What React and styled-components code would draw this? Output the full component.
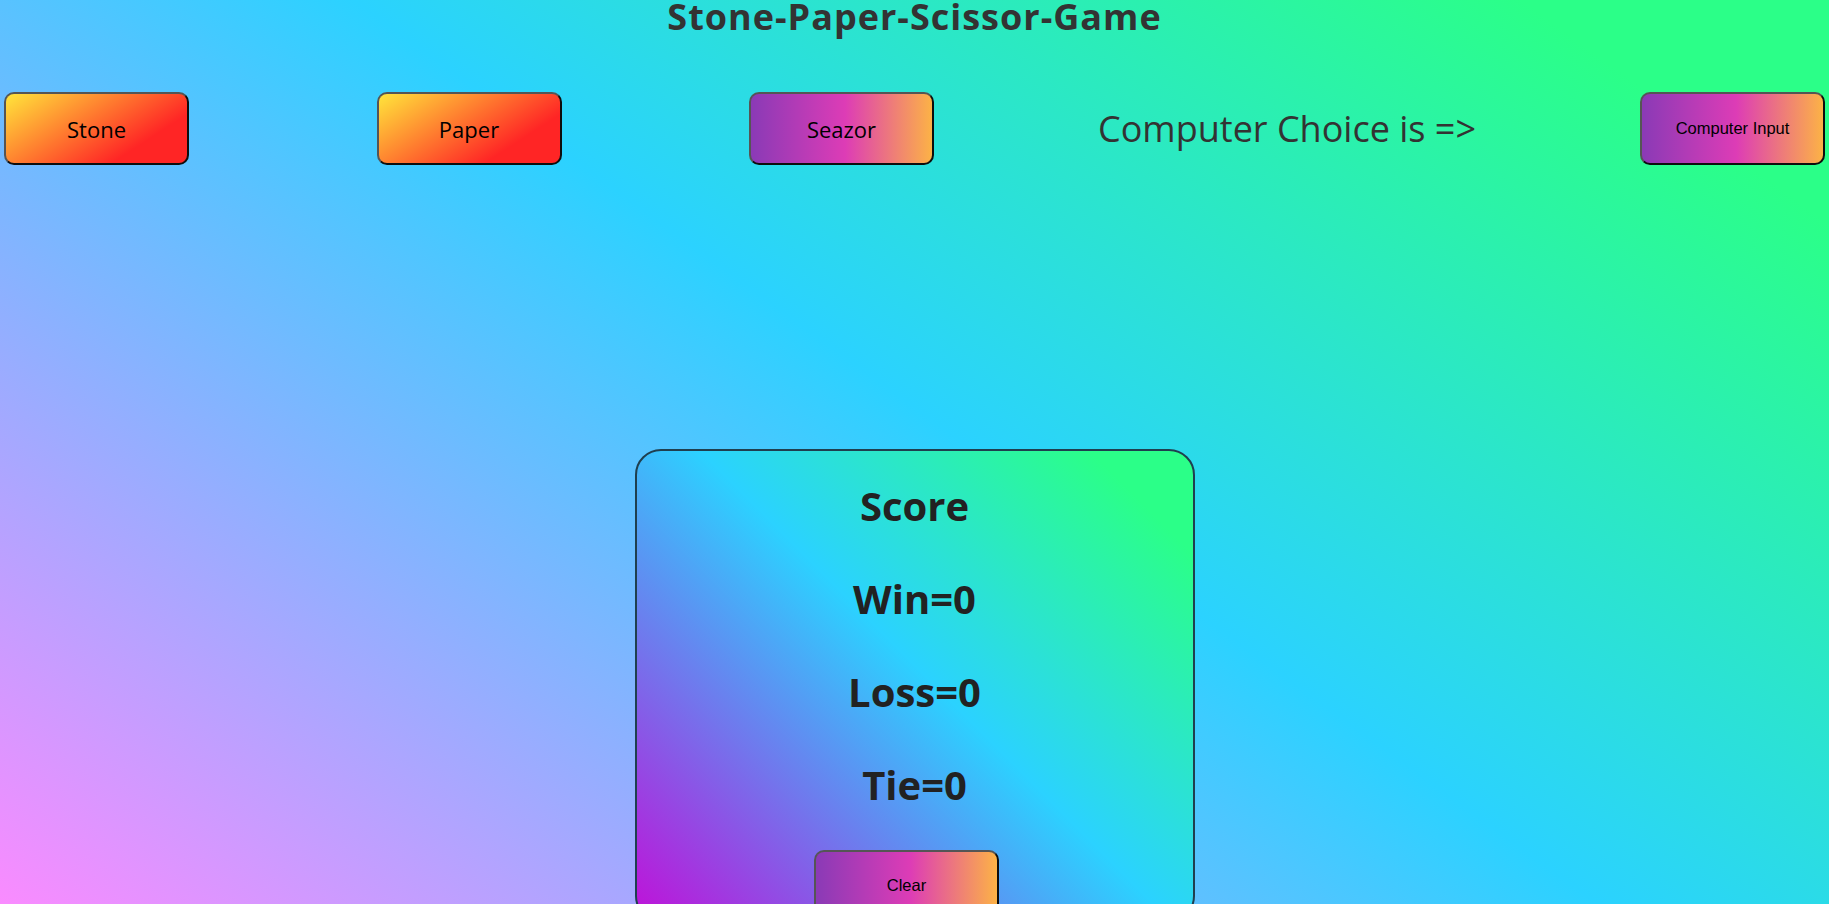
import styled, { createGlobalStyle } from "styled-components";
import { useState } from "react";

const GlobalStyle = createGlobalStyle`
  * {
    box-sizing: border-box;
  }
  body {
    margin: 0;
    font-family: "Open Sans", "Noto Sans", sans-serif;
  }
`;

const choices = ["Stone", "Paper", "Seazor"];

export default function App() {
  const [computer, setComputer] = useState("Computer Input");
  const [score, setScore] = useState({ win: 0, loss: 0, tie: 0 });

  const play = (choice) => {
    const pick = choices[Math.floor(Math.random() * 3)];
    setComputer(pick);
    if (pick === choice) {
      setScore((s) => ({ ...s, tie: s.tie + 1 }));
      return;
    }
    const beats = { Stone: "Seazor", Paper: "Stone", Seazor: "Paper" };
    if (beats[choice] === pick) {
      setScore((s) => ({ ...s, win: s.win + 1 }));
    } else {
      setScore((s) => ({ ...s, loss: s.loss + 1 }));
    }
  };

  return (
    <Page>
      <GlobalStyle />
      <Title>Stone-Paper-Scissor-Game</Title>
      <ChoiceRow>
        <GameButton variant="warm" onClick={() => play("Stone")}>
          Stone
        </GameButton>
        <GameButton variant="warm" onClick={() => play("Paper")}>
          Paper
        </GameButton>
        <GameButton variant="sunset" onClick={() => play("Seazor")}>
          Seazor
        </GameButton>
        <ChoiceText>Computer Choice is =&gt;</ChoiceText>
        <GameButton variant="sunset" small>
          {computer}
        </GameButton>
      </ChoiceRow>
      <ScoreCard>
        <ScoreLine>Score</ScoreLine>
        <ScoreLine>Win={score.win}</ScoreLine>
        <ScoreLine>Loss={score.loss}</ScoreLine>
        <ScoreLine>Tie={score.tie}</ScoreLine>
        <ClearButton
          variant="sunset"
          small
          onClick={() => setScore({ win: 0, loss: 0, tie: 0 })}
        >
          Clear
        </ClearButton>
      </ScoreCard>
    </Page>
  );
}

const Page = styled.div`
  height: 100vh;
  overflow: hidden;
  padding-top: 2px;
  background-color: #2bd2ff;
  background-image: linear-gradient(
    36deg,
    #fa8bff 0%,
    #2bd2ff 52%,
    #2bff88 90%
  );
`;

const Title = styled.h1`
  margin: 0;
  text-align: center;
  font-size: 36px;
  line-height: 30px;
  letter-spacing: 1px;
  font-weight: 700;
  color: #333;
`;

const ChoiceRow = styled.div`
  display: flex;
  justify-content: space-between;
  align-items: center;
  padding: 0 4px;
  margin-top: 60px;
`;

const GameButton = styled.button`
  width: 185px;
  height: 73px;
  border: 2px solid;
  border-color: #555 #0d0d0d #0d0d0d #555;
  border-radius: 10px;
  color: #000;
  cursor: pointer;
  font-family: ${(p) =>
    p.small ? '"Liberation Sans", Arial, sans-serif' : '"Open Sans", sans-serif'};
  font-size: ${(p) => (p.small ? "16.5px" : "22px")};
  background-image: ${(p) =>
    p.variant === "warm"
      ? "linear-gradient(147deg, #ffe53b 0%, #ff2525 74%)"
      : "linear-gradient(90deg, #8a3ab6 0%, #dd3cb6 52%, #fcb246 100%)"};
`;

const ChoiceText = styled.div`
  width: 331px;
  display: flex;
  justify-content: center;
  white-space: nowrap;
  font-size: 36px;
  font-weight: 400;
  color: #333;
`;

const ScoreCard = styled.div`
  width: 560px;
  height: 473px;
  margin: 284px auto 0;
  padding-top: 28px;
  border: 2px solid #1f3f4f;
  border-radius: 26px;
  display: flex;
  flex-direction: column;
  align-items: center;
  gap: 40px;
  background-image: linear-gradient(
    45deg,
    #c010d8 0%,
    #2bd2ff 52%,
    #2bff88 90%
  );
`;

const ScoreLine = styled.div`
  font-size: 40px;
  line-height: 53px;
  font-weight: 700;
  color: #222;
`;

const ClearButton = styled(GameButton)`
  margin-top: -1px;
  margin-right: 16px;
`;
